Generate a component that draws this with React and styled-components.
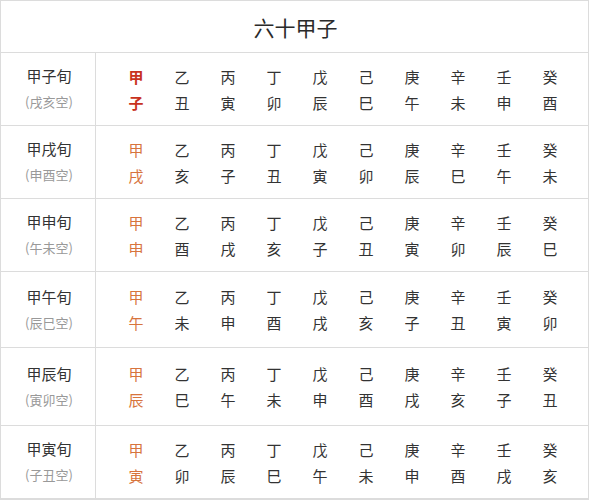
import React from "react";
import styled, { createGlobalStyle } from "styled-components";

const Global = createGlobalStyle`
  html, body { margin: 0; padding: 0; background: #fff; }
  body { font-family: "Noto Sans CJK SC", "Noto Sans", sans-serif; color: #333; }
`;

const Table = styled.div`
  width: 589px;
  box-sizing: border-box;
  border: 1px solid #dcdcdc;
  border-bottom-width: 2px;
  display: flex;
  flex-direction: column;
`;

const Title = styled.div`
  height: 51px;
  display: flex;
  align-items: center;
  justify-content: center;
  font-size: 21px;
  color: #2a2a2a;
  padding-left: 2px;
  border-bottom: 1px solid #dcdcdc;
`;

const Row = styled.div`
  display: grid;
  grid-template-columns: 95px 1fr;
  height: ${(p) => p.$h}px;
  border-bottom: ${(p) => (p.$last ? "none" : "1px solid #dcdcdc")};
  box-sizing: border-box;
`;

const Label = styled.div`
  border-right: 1px solid #dcdcdc;
  display: flex;
  flex-direction: column;
  align-items: center;
  justify-content: center;
  padding-left: 2px;
`;

const Name = styled.div`
  font-size: 15px;
  line-height: 26px;
  color: #333;
`;

const Empty = styled.div`
  font-size: 13px;
  line-height: 26px;
  color: #999;
`;

const Cells = styled.div`
  display: grid;
  grid-template-columns: repeat(10, 46px);
  grid-auto-rows: 26px;
  align-content: center;
  padding-left: 17px;
`;

const Cell = styled.div`
  display: flex;
  align-items: center;
  justify-content: center;
  font-size: 15px;
  color: ${(p) => (p.$first ? (p.$strong ? "#c8321e" : "#d7743d") : "#333")};
  font-weight: ${(p) => (p.$strong ? 700 : 400)};
`;

const stems = ["甲", "乙", "丙", "丁", "戊", "己", "庚", "辛", "壬", "癸"];
const rows = [
  { name: "甲子旬", empty: "(戌亥空)", b: ["子", "丑", "寅", "卯", "辰", "巳", "午", "未", "申", "酉"], h: 73 },
  { name: "甲戌旬", empty: "(申酉空)", b: ["戌", "亥", "子", "丑", "寅", "卯", "辰", "巳", "午", "未"], h: 73 },
  { name: "甲申旬", empty: "(午未空)", b: ["申", "酉", "戌", "亥", "子", "丑", "寅", "卯", "辰", "巳"], h: 73 },
  { name: "甲午旬", empty: "(辰巳空)", b: ["午", "未", "申", "酉", "戌", "亥", "子", "丑", "寅", "卯"], h: 76 },
  { name: "甲辰旬", empty: "(寅卯空)", b: ["辰", "巳", "午", "未", "申", "酉", "戌", "亥", "子", "丑"], h: 78 },
  { name: "甲寅旬", empty: "(子丑空)", b: ["寅", "卯", "辰", "巳", "午", "未", "申", "酉", "戌", "亥"], h: 72 },
];

export default function App() {
  return (
    <>
      <Global />
      <Table>
        <Title>六十甲子</Title>
        {rows.map((r, i) => (
          <Row key={r.name} $h={r.h} $last={i === rows.length - 1}>
            <Label>
              <Name>{r.name}</Name>
              <Empty>{r.empty}</Empty>
            </Label>
            <Cells>
              {stems.map((s, j) => (
                <Cell key={"s" + j} $first={j === 0} $strong={i === 0 && j === 0}>{s}</Cell>
              ))}
              {r.b.map((s, j) => (
                <Cell key={"b" + j} $first={j === 0} $strong={i === 0 && j === 0}>{s}</Cell>
              ))}
            </Cells>
          </Row>
        ))}
      </Table>
    </>
  );
}
